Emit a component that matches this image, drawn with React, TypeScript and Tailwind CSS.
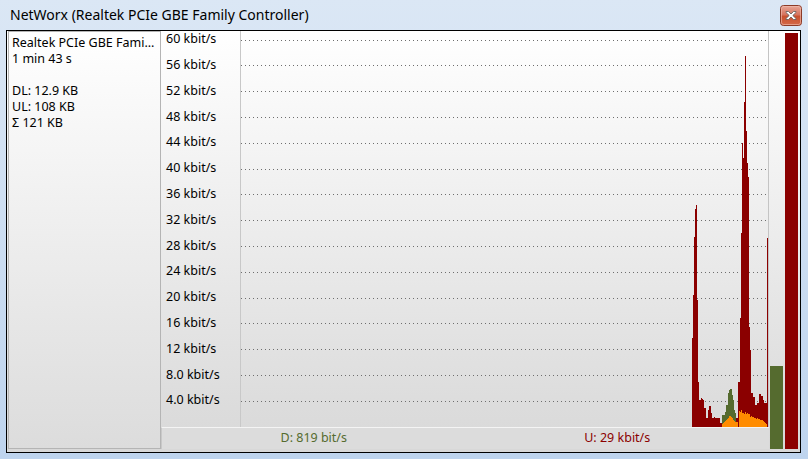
import React from 'react'

const FONT = { fontFamily: '"Noto Sans", "Open Sans", sans-serif' }

const LABELS = ['60 kbit/s', '56 kbit/s', '52 kbit/s', '48 kbit/s', '44 kbit/s', '40 kbit/s', '36 kbit/s', '32 kbit/s', '28 kbit/s', '24 kbit/s', '20 kbit/s', '16 kbit/s', '12 kbit/s', '8.0 kbit/s', '4.0 kbit/s']

// [screen x, top y] per 1px column
const RED: [number, number][] = [
  [692, 338], [693, 295], [694, 237], [695, 209], [696, 205], [697, 300], [698, 382], [699, 400], [700, 400], [701, 398],
  [702, 399], [703, 400], [704, 408], [705, 408], [706, 418], [707, 418], [708, 410], [709, 406], [710, 406], [711, 413],
  [712, 418], [713, 418], [714, 417], [715, 418], [716, 418], [717, 418], [718, 418], [719, 418], [720, 423], [721, 423],
  [723, 420], [724, 420], [725, 420], [726, 420], [727, 420], [728, 420], [729, 420], [730, 420], [731, 420], [732, 420],
  [733, 418], [734, 418], [735, 418], [736, 418], [737, 418], [738, 382], [739, 382], [740, 318], [741, 233], [742, 143],
  [743, 158], [744, 102], [745, 56], [746, 131], [747, 163], [748, 177], [749, 327], [750, 350], [751, 393], [752, 393],
  [753, 397], [754, 397], [755, 405], [756, 405], [757, 403], [758, 403], [759, 394], [760, 394], [761, 396], [762, 396],
  [763, 400], [764, 403], [765, 403], [766, 403], [767, 238],
]

const GREEN: [number, number][] = [
  [722, 415], [723, 415], [724, 415], [725, 412], [726, 405], [727, 405], [728, 393], [729, 390], [730, 389], [731, 389],
  [732, 395], [733, 400], [734, 410], [735, 413],
]

const ORANGE: [number, number][] = [
  [722, 424], [723, 423], [724, 422], [725, 421], [726, 420], [727, 419], [728, 418], [729, 416], [730, 416], [731, 417],
  [732, 418], [733, 420], [734, 421], [735, 422], [736, 422], [737, 422], [739, 411], [740, 412], [741, 410],
  [742, 413], [743, 413], [744, 414], [745, 412], [746, 414], [747, 413], [748, 414], [749, 414], [750, 417], [751, 416],
  [752, 417], [753, 417], [754, 418], [755, 418], [756, 419], [757, 418], [758, 419], [759, 419], [760, 420], [761, 420],
  [762, 420], [763, 421], [764, 422], [765, 423], [766, 424],
]

function Bars({ data, color }: { data: [number, number][]; color: string }) {
  return (
    <>
      {data.map(([x, y]) => (
        <rect key={x} x={x - 241} y={y - 31} width={1} height={427 - y} fill={color} />
      ))}
    </>
  )
}

function CloseButton() {
  return (
    <svg width="22" height="21" viewBox="0 0 22 21">
      <defs>
        <linearGradient id="cb" x1="0" y1="0" x2="0" y2="1">
          <stop offset="0" stopColor="#e9a99a" />
          <stop offset="0.45" stopColor="#d67560" />
          <stop offset="0.55" stopColor="#c9512f" />
          <stop offset="1" stopColor="#d46a4a" />
        </linearGradient>
      </defs>
      <rect x="0.5" y="0.5" width="21" height="20" rx="3" fill="url(#cb)" stroke="#8c3b28" />
      <rect x="1.5" y="1.5" width="19" height="18" rx="2" fill="none" stroke="#f2c0b2" strokeOpacity="0.6" />
      <path
        d="M6 6.5 L8.5 6.5 L11 9 L13.5 6.5 L16 6.5 L16 7.5 L12.8 10.5 L16 13.5 L16 14.5 L13.5 14.5 L11 12 L8.5 14.5 L6 14.5 L6 13.5 L9.2 10.5 L6 7.5 Z"
        fill="#ffffff"
        stroke="#5a5a5a"
        strokeWidth="0.8"
        strokeLinejoin="round"
      />
    </svg>
  )
}

export default function App() {
  return (
    <div className="flex h-[459px] w-[808px] flex-col bg-gradient-to-b from-[#dbe7f5] to-[#bed4ee] text-black" style={FONT}>
      {/* Title bar */}
      <div className="flex h-[30px] items-center justify-between pl-[10px] pr-[6px]">
        <span className="text-[14px] leading-none">NetWorx (Realtek PCIe GBE Family Controller)</span>
        <div className="mt-[1px]">
          <CloseButton />
        </div>
      </div>

      {/* Client area */}
      <div className="mx-[6px] flex h-[423px] w-[795px] border border-black bg-gradient-to-b from-white to-[#d8d8d8] pb-[3px] pl-[1px] pr-[2px]">
        {/* Info panel */}
        <div className="flex w-[153px] flex-col border border-[#b4b4b4] bg-gradient-to-b from-white to-[#dcdcdc] pl-[3px] pt-[3px] text-[12.5px] leading-[16px]">
          <span>Realtek PCIe GBE Fami...</span>
          <span>1 min 43 s</span>
          <span>&nbsp;</span>
          <span>DL: 12.9 KB</span>
          <span>UL: 108 KB</span>
          <span>Σ 121 KB</span>
        </div>

        {/* Graph panel */}
        <div className="flex w-[608px] flex-col">
          <div className="flex h-[396px]">
            <div className="flex w-[80px] flex-col gap-[8.8px] border-r border-[#c8c8c8] pl-[5px] text-[12.5px]">
              {LABELS.map((l) => (
                <span key={l} className="flex h-[17px] items-center leading-none">
                  {l}
                </span>
              ))}
            </div>
            <div className="w-[528px] border-r border-[#c4c4c4]">
              <svg width="527" height="396" className="block">
                {LABELS.map((l, i) => {
                  const y = 426.5 - 25.8 * (15 - i) - 31
                  return (
                    <line key={l} x1="0" x2="527" y1={Math.round(y) + 0.5} y2={Math.round(y) + 0.5} stroke="#6e6e6e" strokeDasharray="1 3" />
                  )
                })}
                <Bars data={RED} color="#8b0000" />
                <Bars data={GREEN} color="#556b2f" />
                <Bars data={ORANGE} color="#ff8c00" />
              </svg>
            </div>
          </div>
          <div className="flex h-[22px] border-l border-t border-l-[#c8c8c8] border-t-[#f4f4f4] bg-[#dcdcdc] text-[12.5px]">
            <div className="flex flex-1 items-center justify-center text-[#556b2f]">D: 819 bit/s</div>
            <div className="flex flex-1 items-center justify-center text-[#8b0000]">U: 29 kbit/s</div>
          </div>
        </div>

        {/* Level bars */}
        <div className="ml-[1px] flex w-[13px] flex-col justify-end">
          <div className="h-[83px] bg-[#556b2f]" />
        </div>
        <div className="ml-[2px] flex w-[13px] flex-col justify-end">
          <div className="h-[416px] bg-[#8b0000]" />
        </div>
      </div>
    </div>
  )
}
